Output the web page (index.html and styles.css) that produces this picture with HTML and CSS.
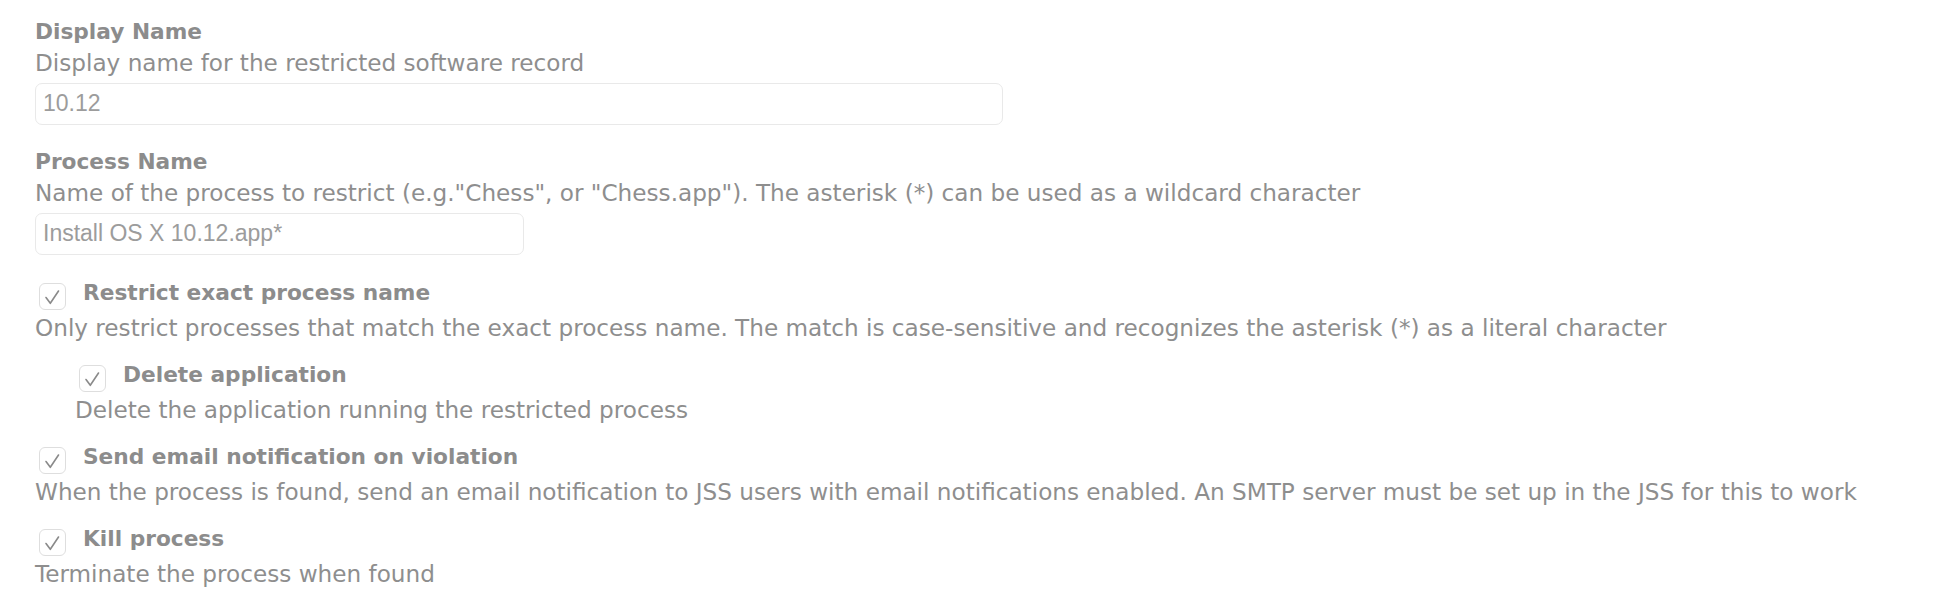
FILE: index.html
```html
<!DOCTYPE html>
<html>
<head>
<meta charset="utf-8">
<link rel="stylesheet" href="styles.css">
</head>
<body>
<div class="form">
  <div class="field">
    <div class="label">Display Name</div>
    <div class="desc">Display name for the restricted software record</div>
    <div class="input input-wide">10.12</div>
  </div>
  <div class="field">
    <div class="label">Process Name</div>
    <div class="desc">Name of the process to restrict (e.g."Chess", or "Chess.app"). The asterisk (*) can be used as a wildcard character</div>
    <div class="input input-narrow">Install OS X 10.12.app*</div>
  </div>
  <div class="options">
    <div class="option">
      <div class="check-row">
        <span class="box"><svg width="27" height="27" viewBox="0 0 27 27"><polyline points="7,14.5 11.3,20.3 19.5,8" fill="none" stroke="#8a8a8a" stroke-width="1.6" stroke-linecap="round" stroke-linejoin="round"/></svg></span>
        <span class="title">Restrict exact process name</span>
      </div>
      <div class="desc">Only restrict processes that match the exact process name. The match is case-sensitive and recognizes the asterisk (*) as a literal character</div>
    </div>
    <div class="option nested">
      <div class="check-row">
        <span class="box"><svg width="27" height="27" viewBox="0 0 27 27"><polyline points="7,14.5 11.3,20.3 19.5,8" fill="none" stroke="#8a8a8a" stroke-width="1.6" stroke-linecap="round" stroke-linejoin="round"/></svg></span>
        <span class="title">Delete application</span>
      </div>
      <div class="desc">Delete the application running the restricted process</div>
    </div>
    <div class="option">
      <div class="check-row">
        <span class="box"><svg width="27" height="27" viewBox="0 0 27 27"><polyline points="7,14.5 11.3,20.3 19.5,8" fill="none" stroke="#8a8a8a" stroke-width="1.6" stroke-linecap="round" stroke-linejoin="round"/></svg></span>
        <span class="title">Send email notification on violation</span>
      </div>
      <div class="desc">When the process is found, send an email notification to JSS users with email notifications enabled. An SMTP server must be set up in the JSS for this to work</div>
    </div>
    <div class="option">
      <div class="check-row">
        <span class="box"><svg width="27" height="27" viewBox="0 0 27 27"><polyline points="7,14.5 11.3,20.3 19.5,8" fill="none" stroke="#8a8a8a" stroke-width="1.6" stroke-linecap="round" stroke-linejoin="round"/></svg></span>
        <span class="title">Kill process</span>
      </div>
      <div class="desc">Terminate the process when found</div>
    </div>
  </div>
</div>
</body>
</html>
```
FILE: styles.css
```css
html, body {
  margin: 0;
  padding: 0;
  background: #ffffff;
}
.form {
  padding: 17px 0 0 35px;
  font-family: "DejaVu Sans", "Open Sans", sans-serif;
  color: #8e8e8e;
}
.field {
  margin-bottom: 22px;
}
.label {
  font-size: 21.7px;
  font-weight: bold;
  line-height: 30px;
  color: #8c8c8c;
  white-space: nowrap;
}
.desc {
  font-size: 23.15px;
  line-height: 32px;
  white-space: nowrap;
}
.input {
  box-sizing: border-box;
  height: 42px;
  margin-top: 4px;
  border: 1.5px solid #e9e9e9;
  border-radius: 7px;
  padding: 0 7px;
  font-family: "Liberation Sans", Arial, sans-serif;
  font-size: 23px;
  line-height: 39px;
  color: #9c9c9c;
}
.input-wide { width: 968px; }
.input-narrow { width: 489px; }
.options {
  padding-top: 1px;
}
.option {
  margin-bottom: 16px;
}
.option .desc {
  margin-top: 4px;
}
.nested {
  padding-left: 40px;
}
.check-row {
  display: flex;
  align-items: flex-start;
  gap: 17px;
  padding-left: 4px;
  height: 30px;
}
.box {
  box-sizing: border-box;
  flex: none;
  width: 27px;
  height: 27px;
  margin-top: 5px;
  border: 1.5px solid #dedede;
  border-radius: 6px;
  background: #fff;
  position: relative;
}
.box svg {
  display: block;
  position: absolute;
  left: -1.5px;
  top: -1.5px;
}
.title {
  font-size: 21.7px;
  font-weight: bold;
  line-height: 30px;
  color: #8c8c8c;
  white-space: nowrap;
}
```
